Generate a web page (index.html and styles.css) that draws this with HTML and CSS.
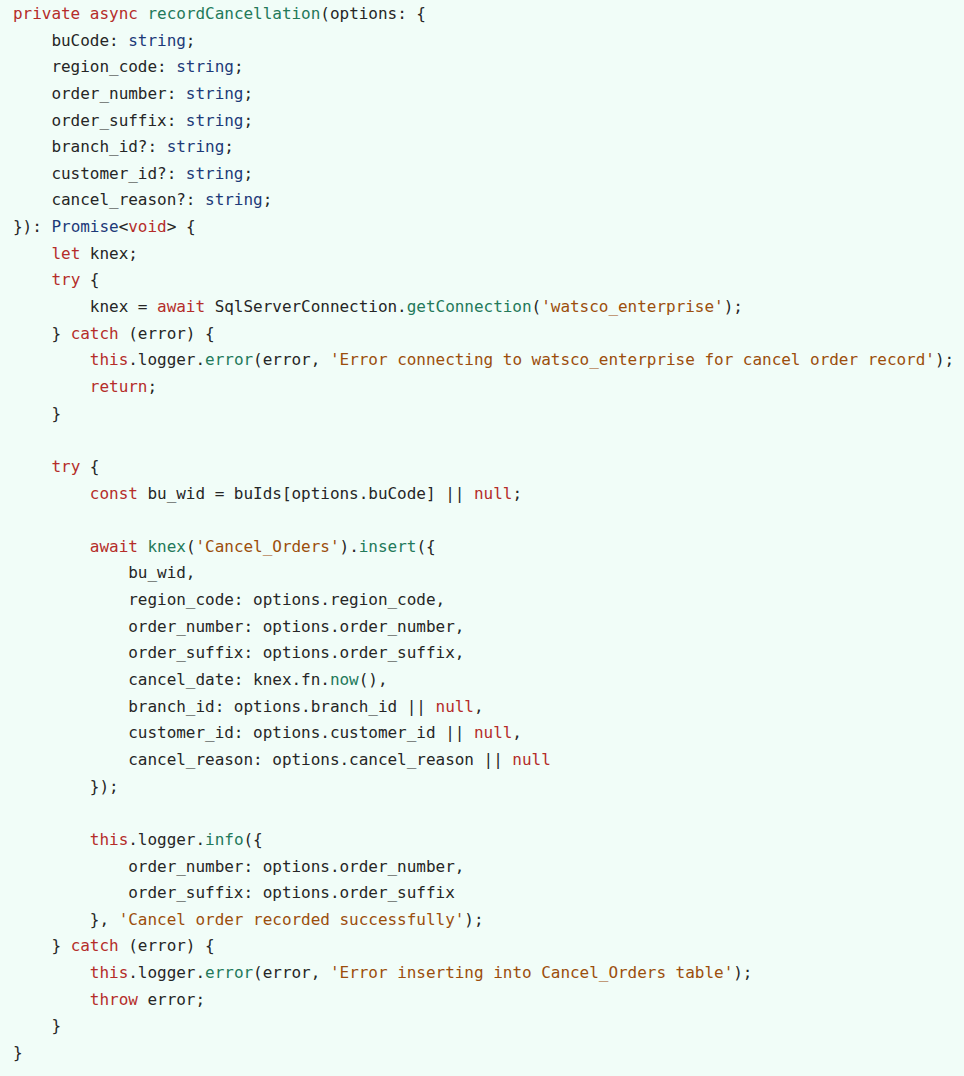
FILE: index.html
```html
<!DOCTYPE html>
<html>
<head>
<meta charset="utf-8">
<link rel="stylesheet" href="styles.css">
</head>
<body>
<pre class="code"><span class="k">private</span> <span class="k">async</span> <span class="f">recordCancellation</span>(options: {
    buCode: <span class="t">string</span>;
    region_code: <span class="t">string</span>;
    order_number: <span class="t">string</span>;
    order_suffix: <span class="t">string</span>;
    branch_id?: <span class="t">string</span>;
    customer_id?: <span class="t">string</span>;
    cancel_reason?: <span class="t">string</span>;
}): <span class="t">Promise</span>&lt;<span class="k">void</span>&gt; {
    <span class="k">let</span> knex;
    <span class="k">try</span> {
        knex = <span class="k">await</span> SqlServerConnection.<span class="f">getConnection</span>(<span class="s">'watsco_enterprise'</span>);
    } <span class="k">catch</span> (error) {
        <span class="k">this</span>.logger.<span class="f">error</span>(error, <span class="s">'Error connecting to watsco_enterprise for cancel order record'</span>);
        <span class="k">return</span>;
    }

    <span class="k">try</span> {
        <span class="k">const</span> bu_wid = buIds[options.buCode] || <span class="k">null</span>;

        <span class="k">await</span> <span class="f">knex</span>(<span class="s">'Cancel_Orders'</span>).<span class="f">insert</span>({
            bu_wid,
            region_code: options.region_code,
            order_number: options.order_number,
            order_suffix: options.order_suffix,
            cancel_date: knex.fn.<span class="f">now</span>(),
            branch_id: options.branch_id || <span class="k">null</span>,
            customer_id: options.customer_id || <span class="k">null</span>,
            cancel_reason: options.cancel_reason || <span class="k">null</span>
        });

        <span class="k">this</span>.logger.<span class="f">info</span>({
            order_number: options.order_number,
            order_suffix: options.order_suffix
        }, <span class="s">'Cancel order recorded successfully'</span>);
    } <span class="k">catch</span> (error) {
        <span class="k">this</span>.logger.<span class="f">error</span>(error, <span class="s">'Error inserting into Cancel_Orders table'</span>);
        <span class="k">throw</span> error;
    }
}</pre>
</body>
</html>
```

FILE: styles.css
```css
html, body {
  margin: 0;
  padding: 0;
  background: #f1fdf8;
}
body {
  width: 964px;
  height: 1076px;
  overflow: hidden;
}
.code {
  margin: 0;
  padding: 1px 0 0 13px;
  font-family: "DejaVu Sans Mono", "Liberation Mono", monospace;
  font-size: 16px;
  line-height: 26.64px;
  letter-spacing: -0.03px;
  color: #262626;
  white-space: pre;
}
.k { color: #b52d2a; }
.f { color: #23795a; }
.t { color: #1d3a78; }
.s { color: #9c4e0c; }
```
